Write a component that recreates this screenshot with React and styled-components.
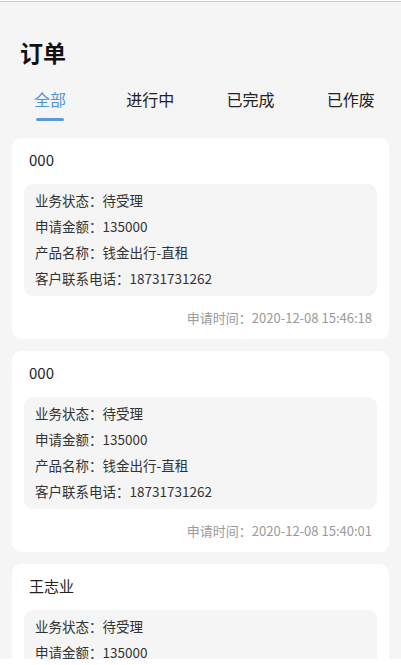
import styled, { createGlobalStyle } from "styled-components";
import { useState } from "react";

const GlobalStyle = createGlobalStyle`
  body {
    margin: 0;
    background: #ffffff;
    font-family: "Noto Sans CJK SC", Roboto, "Noto Sans", sans-serif;
  }
`;

const Page = styled.div`
  height: 658px;
  overflow: hidden;
  background: #f5f5f5;
  border-top: 1px solid #cacaca;
  margin-top: 1px;
  box-sizing: border-box;
`;

const Title = styled.h1`
  margin: 0;
  padding: 34px 0 0 20px;
  height: 32px;
  line-height: 32px;
  font-size: 23px;
  font-weight: 700;
  color: #111;
`;

const Tabs = styled.div`
  display: flex;
  margin-top: 19px;
  height: 44px;
`;

const Tab = styled.div`
  flex: 1;
  display: flex;
  flex-direction: column;
  align-items: center;
  font-size: 16px;
  line-height: 24px;
  color: ${(p) => (p.active ? "#4f93d8" : "#222")};
  cursor: pointer;

  &::after {
    content: "";
    width: 28px;
    height: 3px;
    margin-top: 7px;
    border-radius: 2px;
    background: ${(p) => (p.active ? "#5a9ad8" : "transparent")};
  }
`;

const List = styled.div`
  display: flex;
  flex-direction: column;
  gap: 12px;
  padding: 0 12px;
  margin-top: 7px;
`;

const Card = styled.div`
  background: #fff;
  border-radius: 9px;
  padding: 11px 12px 11px;
`;

const Name = styled.div`
  padding-left: 5px;
  font-size: 15px;
  line-height: 22px;
  color: #222;
`;

const InfoBox = styled.div`
  margin-top: 13px;
  background: #f5f5f5;
  border-radius: 9px;
  padding: 3px 11px 5px;
`;

const Row = styled.div`
  font-size: 13.5px;
  line-height: 26px;
  color: #333;
`;

const Time = styled.div`
  margin-top: 12px;
  padding-right: 5px;
  text-align: right;
  font-size: 13px;
  line-height: 20px;
  color: #9a9a9a;
`;

const tabs = ["全部", "进行中", "已完成", "已作废"];

const orders = [
  { name: "000", status: "待受理", amount: "135000", product: "钱金出行-直租", phone: "18731731262", time: "2020-12-08 15:46:18" },
  { name: "000", status: "待受理", amount: "135000", product: "钱金出行-直租", phone: "18731731262", time: "2020-12-08 15:40:01" },
  { name: "王志业", status: "待受理", amount: "135000", product: "钱金出行-直租", phone: "18731731262", time: "2020-12-08 15:30:12" },
];

export default function App() {
  const [active, setActive] = useState(0);
  return (
    <>
      <GlobalStyle />
      <Page>
        <Title>订单</Title>
        <Tabs>
          {tabs.map((t, i) => (
            <Tab key={t} active={i === active} onClick={() => setActive(i)}>
              {t}
            </Tab>
          ))}
        </Tabs>
        <List>
          {orders.map((o, i) => (
            <Card key={i}>
              <Name>{o.name}</Name>
              <InfoBox>
                <Row>业务状态：{o.status}</Row>
                <Row>申请金额：{o.amount}</Row>
                <Row>产品名称：{o.product}</Row>
                <Row>客户联系电话：{o.phone}</Row>
              </InfoBox>
              <Time>申请时间：{o.time}</Time>
            </Card>
          ))}
        </List>
      </Page>
    </>
  );
}
